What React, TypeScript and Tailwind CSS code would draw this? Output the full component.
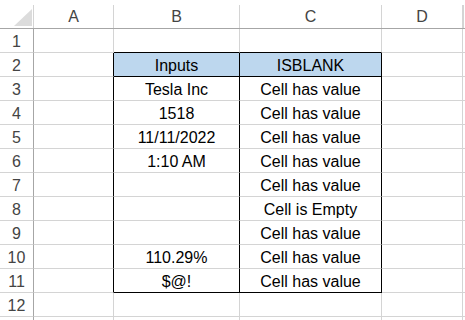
import React from "react";

const cols = ["A", "B", "C", "D"];

const inputs: Record<number, string> = {
  2: "Inputs",
  3: "Tesla Inc",
  4: "1518",
  5: "11/11/2022",
  6: "1:10 AM",
  10: "110.29%",
  11: "$@!",
};

const result = (r: number) => {
  if (r === 2) return "ISBLANK";
  if (r >= 3 && r <= 11) return r === 8 ? "Cell is Empty" : "Cell has value";
  return "";
};

const inTable = (r: number) => r >= 2 && r <= 11;

function Cell({
  text,
  right,
  bottom,
  fill,
}: {
  text?: string;
  right: string;
  bottom: string;
  fill?: boolean;
}) {
  return (
    <div
      className={`flex items-center justify-center border-r border-b pt-[3px] text-[16px] text-black ${right} ${bottom} ${
        fill ? "bg-[#bdd7ee]" : "bg-white"
      }`}
    >
      {text}
    </div>
  );
}

export default function App() {
  const rows = Array.from({ length: 13 }, (_, i) => i + 1);
  return (
    <div
      className="grid h-[320px] w-[465px] overflow-hidden bg-white grid-cols-[34px_80px_126px_142px_81px_1fr] grid-rows-[29px_repeat(13,24px)]"
      style={{ fontFamily: '"Liberation Sans", Arial, sans-serif' }}
    >
      {/* corner */}
      <div className="relative border-b border-[#a6a6a6]">
        <div className="ml-auto mt-[5px] h-[23px] w-px bg-[#d4d4d4]" />
        <svg className="absolute left-[14px] top-[9px]" width="19" height="18">
          <polygon points="18,0 18,17 0,17" fill="#dcdcdc" />
        </svg>
      </div>
      {cols.map((c) => (
        <div key={c} className="flex border-b border-[#a6a6a6]">
          <div className="flex flex-1 items-center justify-center pt-[5px] text-[16px] text-[#444]">
            {c}
          </div>
          <div className="mt-[5px] h-[23px] w-px bg-[#d4d4d4]" />
        </div>
      ))}
      <div className="flex border-b border-[#a6a6a6]">
        <div className="mt-[5px] h-[23px] w-px bg-[#d4d4d4]" />
      </div>

      {rows.map((r) => (
        <React.Fragment key={r}>
          <div className="flex items-center justify-center border-r border-b border-r-[#a6a6a6] border-b-[#d4d4d4] pt-[3px] text-[16px] text-[#444]">
            {r <= 12 ? r : ""}
          </div>
          <Cell
            right={inTable(r) ? "border-r-black" : "border-r-[#d4d4d4]"}
            bottom="border-b-[#d4d4d4]"
          />
          <Cell
            text={inputs[r] ?? ""}
            fill={r === 2}
            right={inTable(r) ? "border-r-black" : "border-r-[#d4d4d4]"}
            bottom={
              r === 1 || r === 2 || r === 11
                ? "border-b-black"
                : "border-b-[#d4d4d4]"
            }
          />
          <Cell
            text={result(r)}
            fill={r === 2}
            right={inTable(r) ? "border-r-black" : "border-r-[#d4d4d4]"}
            bottom={
              r === 1 || r === 2 || r === 11
                ? "border-b-black"
                : "border-b-[#d4d4d4]"
            }
          />
          <Cell right="border-r-[#d4d4d4]" bottom="border-b-[#d4d4d4]" />
          <div className="border-b border-[#d4d4d4]" />
        </React.Fragment>
      ))}
    </div>
  );
}
